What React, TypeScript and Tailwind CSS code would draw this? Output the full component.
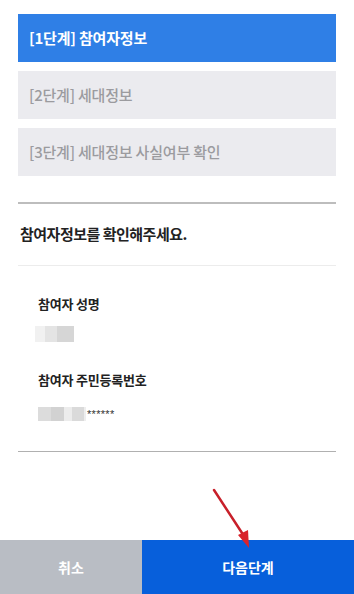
import React from "react";

const font = { fontFamily: '"Noto Sans CJK KR", "Noto Sans", sans-serif' };

export default function App() {
  return (
    <div className="relative w-[354px] h-[594px] bg-white flex flex-col overflow-hidden" style={font}>
      <div className="flex-1 px-[18px] pt-[14px]">
        <div className="flex flex-col gap-[9px]">
          <div className="h-[48px] bg-[#2f7fe6] flex items-center pl-[11px] text-white text-[15px] font-bold tracking-[-0.2px]">
            [1단계] 참여자정보
          </div>
          <div className="h-[48px] bg-[#ebebef] flex items-center pl-[11px] text-[#9b9b9f] text-[15px] font-medium tracking-[-0.2px]">
            [2단계] 세대정보
          </div>
          <div className="h-[48px] bg-[#ebebef] flex items-center pl-[11px] text-[#9b9b9f] text-[15px] font-medium tracking-[-0.2px]">
            [3단계] 세대정보 사실여부 확인
          </div>
        </div>
        <div className="mt-[26px] h-[2px] bg-[#bdbdbd]" />
        <div className="h-[61px] flex items-center pl-[2px] text-[15px] font-bold text-[#222] tracking-[-0.5px]">
          참여자정보를 확인해주세요.
        </div>
        <div className="h-px bg-[#ececec]" />
        <div className="pl-[20px] pt-[28px]">
          <div className="text-[13px] font-bold text-[#222] tracking-[-0.2px] leading-[20px]">참여자 성명</div>
          <div className="mt-[12px] -ml-[3px] flex h-[16px]">
            <div className="w-[10px] bg-[#f1f1f1]" />
            <div className="w-[12px] bg-[#e4e4e4]" />
            <div className="w-[17px] bg-[#d6d6d6]" />
          </div>
          <div className="mt-[28px] text-[13px] font-bold text-[#222] tracking-[-0.2px] leading-[20px]">참여자 주민등록번호</div>
          <div className="mt-[17px] flex items-center h-[14px]">
            <div className="flex h-[14px]">
              <div className="w-[13px] bg-[#dcdcdc]" />
              <div className="w-[13px] bg-[#d2d2d2]" />
              <div className="w-[8px] bg-[#ececec]" />
              <div className="w-[12px] bg-[#dadada]" />
              <div className="w-[2px] bg-[#eeeeee]" />
            </div>
            <span className="ml-[1px] text-[11px] text-[#333] tracking-[0.3px] leading-[14px]" style={{ fontFamily: '"Liberation Sans", sans-serif' }}>******</span>
          </div>
        </div>
        <div className="mt-[30px] h-px bg-[#b0b0b0]" />
      </div>
      <div className="h-[54px] flex">
        <div className="w-[142px] bg-[#b9bdc4] flex items-center justify-center text-white text-[14px] font-bold">
          취소
        </div>
        <div className="flex-1 bg-[#075fdb] flex items-center justify-center text-white text-[14px] font-bold">
          다음단계
        </div>
      </div>
      <svg className="absolute left-0 top-0 pointer-events-none" width="354" height="594">
        <line x1="214" y1="490" x2="244" y2="536" stroke="#c8202a" strokeWidth="2.5" strokeLinecap="round" />
        <polygon points="249,548 238,535 248,530" fill="#d9232b" />
      </svg>
    </div>
  );
}
